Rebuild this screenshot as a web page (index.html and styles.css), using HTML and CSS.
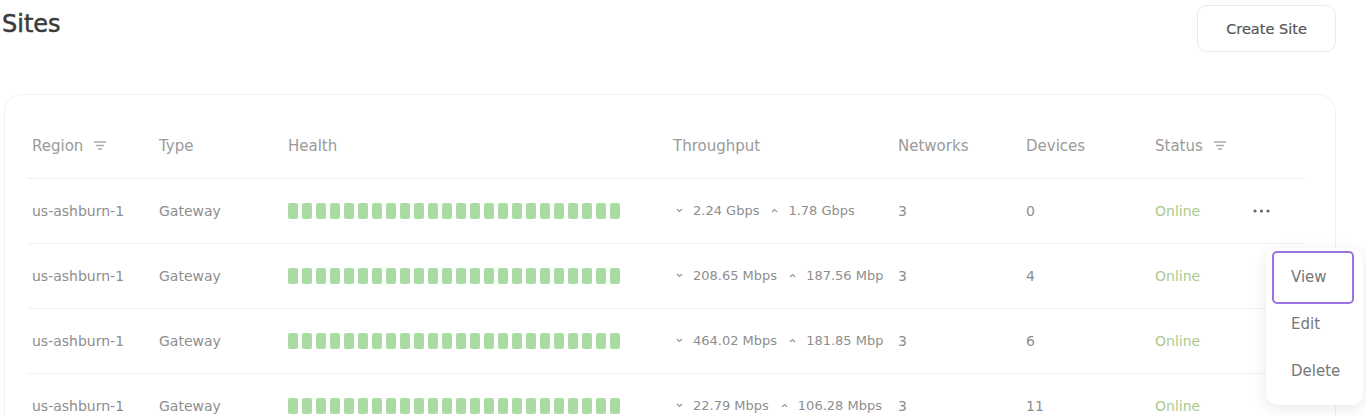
FILE: index.html
```html
<!DOCTYPE html>
<html>
<head>
    <meta charset="utf-8"/>
    <title>Sites</title>
    <link rel="stylesheet" href="styles.css">
</head>
<body>
<div class="page">
    <div class="top">
        <h1 class="title">Sites</h1>
        <button class="create-btn">Create Site</button>
    </div>
    <div class="card">
        <table class="sites">
            <colgroup>
                <col style="width:127px">
                <col style="width:129px">
                <col style="width:385px">
                <col style="width:225px">
                <col style="width:128px">
                <col style="width:129px">
                <col style="width:98px">
                <col>
            </colgroup>
            <thead>
                <tr>
                    <th>Region <svg class="filter" width="12" height="9" viewBox="0 0 12 9"><path d="M0 1h12M2 4.5h8M4 8h4" stroke="#aaa" stroke-width="1.4"/></svg></th>
                    <th>Type</th>
                    <th>Health</th>
                    <th>Throughput</th>
                    <th>Networks</th>
                    <th>Devices</th>
                    <th>Status <svg class="filter" width="12" height="9" viewBox="0 0 12 9"><path d="M0 1h12M2 4.5h8M4 8h4" stroke="#aaa" stroke-width="1.4"/></svg></th>
                    <th></th>
                </tr>
            </thead>
            <tbody id="rows"></tbody>
        </table>
    </div>
    <div class="menu">
        <a class="menu-item active">View</a>
        <a class="menu-item">Edit</a>
        <a class="menu-item">Delete</a>
    </div>
</div>
<script>
    var sites = [
        {down:'2.24 Gbps', up:'1.78 Gbps', networks:3, devices:0, dots:true},
        {down:'208.65 Mbps', up:'187.56 Mbps', networks:3, devices:4, dots:false},
        {down:'464.02 Mbps', up:'181.85 Mbps', networks:3, devices:6, dots:false},
        {down:'22.79 Mbps', up:'106.28 Mbps', networks:3, devices:11, dots:false}
    ];
    var down = '<svg class="chev" width="7" height="5" viewBox="0 0 7 5"><path d="M1 1l2.5 2.5L6 1" fill="none" stroke="#999" stroke-width="1.2"/></svg>';
    var up = '<svg class="chev" width="7" height="5" viewBox="0 0 7 5"><path d="M1 4l2.5-2.5L6 4" fill="none" stroke="#999" stroke-width="1.2"/></svg>';
    var dots = '<svg width="17" height="4" viewBox="0 0 17 4"><circle cx="2" cy="2" r="1.6" fill="#666"/><circle cx="8.5" cy="2" r="1.6" fill="#666"/><circle cx="15" cy="2" r="1.6" fill="#666"/></svg>';
    var html = '';
    for (var i = 0; i < sites.length; i++) {
        var s = sites[i];
        var bars = '';
        for (var j = 0; j < 24; j++) {
            bars += '<span></span>';
        }
        html += '<tr>' +
            '<td>us-ashburn-1</td>' +
            '<td>Gateway</td>' +
            '<td><div class="health">' + bars + '</div></td>' +
            '<td class="tp"><div class="tp-in">' + down + '<span>' + s.down + '</span>' + up + '<span>' + s.up + '</span></div></td>' +
            '<td>' + s.networks + '</td>' +
            '<td>' + s.devices + '</td>' +
            '<td class="online">Online</td>' +
            '<td class="act">' + (s.dots ? dots : '') + '</td>' +
            '</tr>';
    }
    document.getElementById('rows').innerHTML = html;
</script>
</body>
</html>
```

FILE: styles.css
```css
* {
    box-sizing: border-box;
}
body {
    margin: 0;
    background: #fff;
    font-family: "DejaVu Sans", sans-serif;
    color: #8a8a8a;
    overflow: hidden;
}
.page {
    position: relative;
    height: 416px;
    padding: 0 30px 0 2px;
    overflow: hidden;
}
.top {
    display: flex;
    justify-content: space-between;
    align-items: flex-start;
    padding-top: 5px;
}
.title {
    margin: 5px 0 0;
    font-size: 24px;
    line-height: 28px;
    font-weight: normal;
    color: #3c3c3c;
    -webkit-text-stroke: 0.5px #3c3c3c;
}
.create-btn {
    width: 139px;
    height: 47px;
    border: 1px solid #ebebeb;
    border-radius: 10px;
    background: #fff;
    font-family: "DejaVu Sans", sans-serif;
    font-size: 14.5px;
    color: #555;
    -webkit-text-stroke: 0.2px #555;
}
.card {
    margin: 42px 0 0 2px;
    border: 1px solid #f2f2f2;
    border-bottom: none;
    border-radius: 18px 18px 0 0;
    padding: 19px 29px 0 22px;
    height: 322px;
    overflow: hidden;
}
.sites {
    width: 100%;
    border-collapse: collapse;
    table-layout: fixed;
}
.sites th {
    height: 64px;
    padding: 0 5px;
    text-align: left;
    font-weight: normal;
    font-size: 15px;
    color: #9a9a9a;
    border-bottom: 1px solid #f0f0f0;
    white-space: nowrap;
}
.filter {
    margin-left: 6px;
    vertical-align: 1px;
}
.sites td {
    height: 65px;
    padding: 0 5px;
    font-size: 14px;
    color: #8e8e8e;
    border-bottom: 1px solid #f2f2f2;
    white-space: nowrap;
    overflow: hidden;
}
.health {
    display: flex;
    gap: 4px;
}
.health span {
    width: 10px;
    height: 16px;
    border-radius: 2px;
    background: #a9dca2;
}
.sites td.tp {
    font-size: 13px;
    padding-left: 8px;
    padding-right: 10px;
}
.tp-in {
    display: flex;
    align-items: center;
    gap: 10px;
    overflow: hidden;
}
.tp-in .chev {
    flex-shrink: 0;
}
.tp-in span + .chev {
    margin-left: 2px;
}
.sites td.online {
    color: #abca8e;
}
.act svg {
    display: block;
}
.menu {
    position: absolute;
    left: 1266px;
    top: 248px;
    width: 97px;
    padding: 6px 12px 10px 9px;
    background: #fff;
    border-radius: 12px;
    box-shadow: 0 4px 16px rgba(0, 0, 0, 0.09);
}
.menu-item {
    display: block;
    height: 47px;
    line-height: 47px;
    padding-left: 16px;
    font-size: 15px;
    color: #777;
    cursor: pointer;
}
.menu-item.active {
    outline: 2px solid #9c74e2;
    outline-offset: 1px;
    border-radius: 2px;
}
```
